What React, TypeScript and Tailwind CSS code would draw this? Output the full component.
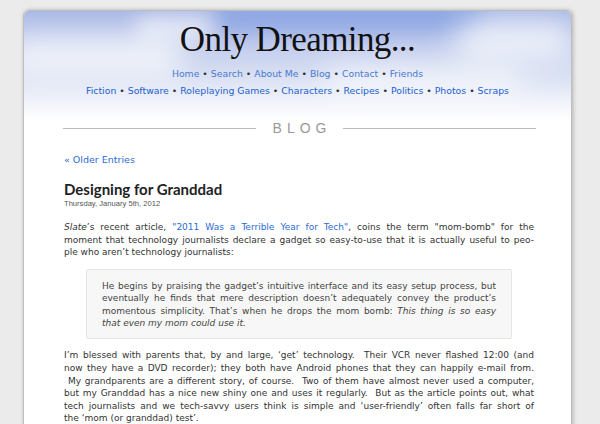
import React from "react";

const sans = "font-['DejaVu_Sans',sans-serif]";

function Line({ children, last }: { children: React.ReactNode; last?: boolean }) {
  return <div className={last ? "" : "text-justify [text-align-last:justify]"}>{children}</div>;
}

function Dot() {
  return <span className="text-[#333] px-[3px]">•</span>;
}

function NavRow({ items, color }: { items: string[]; color: string }) {
  return (
    <div className={`flex justify-center ${color}`}>
      {items.map((it, i) => (
        <span key={it}>
          {i > 0 && <Dot />}
          <a href="#">{it}</a>
        </span>
      ))}
    </div>
  );
}

export default function App() {
  return (
    <div className="h-[424px] bg-[#ebebeb] pt-[10px] overflow-hidden">
      <div className="ml-[23px] w-[549px] h-[440px] bg-white border border-[#bdbdbd] rounded-t-[6px] shadow-[1px_0_4px_rgba(0,0,0,0.25)] overflow-hidden relative">
        {/* sky header */}
        <div className="absolute inset-x-0 top-0 h-[112px] bg-[linear-gradient(to_bottom,#aab9e6_0px,#bfcaec_30px,#d9e0f3_65px,#f2f4fb_92px,#ffffff_110px)]" />
        <div className="absolute left-[190px] top-[-10px] w-[270px] h-[30px] rounded-full bg-[#86a2e3] blur-[10px] opacity-80" />
        <div className="absolute left-[-20px] top-[25px] w-[180px] h-[40px] rounded-full bg-white blur-[14px] opacity-70" />
        <div className="absolute left-[110px] top-[5px] w-[80px] h-[25px] rounded-full bg-white blur-[10px] opacity-60" />
        <div className="absolute left-[430px] top-[10px] w-[120px] h-[40px] rounded-full bg-white blur-[14px] opacity-70" />
        <div className="absolute left-[300px] top-[55px] w-[200px] h-[30px] rounded-full bg-white blur-[14px] opacity-60" />

        <div className="relative">
          <h1 className="text-center font-['Liberation_Serif',serif] text-[35px] leading-[40px] tracking-[-0.6px] text-[#111] pt-[9px]">
            Only Dreaming...
          </h1>
          <div className={`${sans} text-[9.3px] leading-[17px] mt-[5px]`}>
            <NavRow color="text-[#4a78cf]" items={["Home", "Search", "About Me", "Blog", "Contact", "Friends"]} />
            <NavRow
              color="text-[#1d5fd0]"
              items={["Fiction", "Software", "Roleplaying Games", "Characters", "Recipes", "Politics", "Photos", "Scraps"]}
            />
          </div>

          <div className="ml-[39px] mr-[35px] mt-[21px] flex items-center gap-[12px]">
            <div className="flex-1 h-px bg-[#bcbcbc]" />
            <div className="font-['Liberation_Sans',sans-serif] text-[14px] leading-[16px] tracking-[5px] text-[#9a9a9a] pl-[5px]">BLOG</div>
            <div className="flex-1 h-px bg-[#bcbcbc]" />
          </div>

          <div className={`${sans} mx-[40px] w-[470px] text-[#333]`}>
            <a href="#" className="block mt-[18px] text-[9.5px] leading-[12px] text-[#2c6cd2]">« Older Entries</a>

            <h2 className="mt-[14px] font-['Lato',sans-serif] font-bold text-[15px] leading-[18px] text-[#222]">Designing for Granddad</h2>
            <div className="mt-[1px] font-['Liberation_Sans',sans-serif] text-[7.6px] leading-[10px] text-[#555]">Thursday, January 5th, 2012</div>

            <div className="mt-[12px] text-[9px] leading-[12.6px]">
              <Line>
                <i>Slate</i>’s recent article, <a href="#" className="text-[#2c6cd2]">"2011 Was a Terrible Year for Tech"</a>, coins the term "mom-bomb" for the
              </Line>
              <Line>moment that technology journalists declare a gadget so easy-to-use that it is actually useful to peo-</Line>
              <Line last>ple who aren’t technology journalists:</Line>
            </div>

            <div className="mt-[10px] mx-[22px] bg-[#f7f7f7] border border-[#e6e6e6] rounded-[2px] px-[15px] pt-[10px] pb-[9px] text-[9px] leading-[12.4px] text-[#444]">
              <Line>He begins by praising the gadget’s intuitive interface and its easy setup process, but</Line>
              <Line>eventually he finds that mere description doesn’t adequately convey the product’s</Line>
              <Line>
                momentous simplicity. That’s when he drops the mom bomb: <i>This thing is so easy</i>
              </Line>
              <Line last>
                <i>that even my mom could use it.</i>
              </Line>
            </div>

            <div className="mt-[10px] text-[9px] leading-[12.6px]">
              <Line>I’m blessed with parents that, by and large, ‘get’ technology.&nbsp; Their VCR never flashed 12:00 (and</Line>
              <Line>now they have a DVD recorder); they both have Android phones that they can happily e-mail from.</Line>
              <Line>&nbsp;My grandparents are a different story, of course.&nbsp; Two of them have almost never used a computer,</Line>
              <Line>but my Granddad has a nice new shiny one and uses it regularly.&nbsp; But as the article points out, what</Line>
              <Line>tech journalists and we tech-savvy users think is simple and ‘user-friendly’ often falls far short of</Line>
              <Line last>the ‘mom (or granddad) test’.</Line>
            </div>
          </div>
        </div>
      </div>
    </div>
  );
}
